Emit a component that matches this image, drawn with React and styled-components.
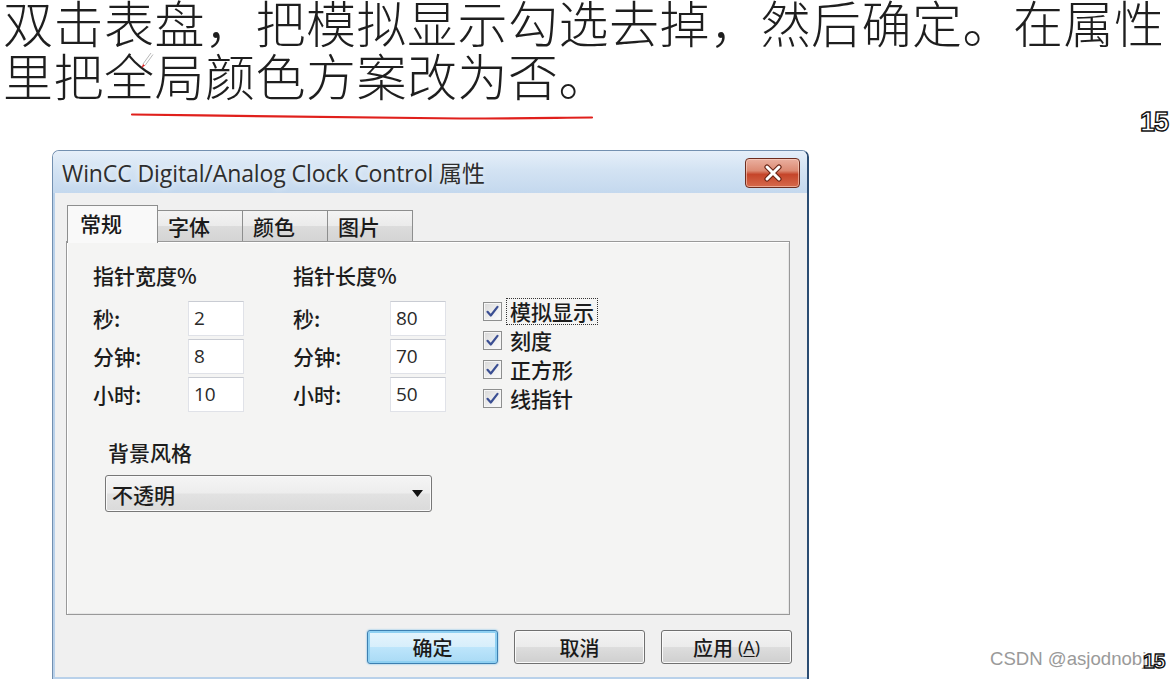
import React from 'react';
import styled, { createGlobalStyle } from 'styled-components';

const GlobalStyle = createGlobalStyle`
  html, body {
    margin: 0;
    padding: 0;
    background: #fff;
  }
  body {
    overflow: hidden;
  }
`;

const cjk = `"Noto Sans CJK SC", "Noto Sans", sans-serif`;
const ui = `"Open Sans", "Noto Sans CJK SC", sans-serif`;

const Page = styled.div`
  position: relative;
  width: 1172px;
  height: 679px;
  overflow: hidden;
  background: #fff;
`;

const Caption = styled.div`
  margin: -5px 0 0 3px;
  font-family: ${cjk};
  font-weight: 300;
  font-size: 50px;
  letter-spacing: 0.5px;
  color: #1e1e1e;
  white-space: nowrap;
`;

const CaptionLine = styled.div`
  height: 53px;
  line-height: 53px;
`;

const Underline = styled.svg`
  display: block;
  margin: 11px 0 0 130px;
  width: 465px;
  height: 10px;
`;

const Pen = styled.svg`
  position: absolute;
  left: 138px;
  top: 52px;
  width: 16px;
  height: 18px;
`;

const PageNo = styled.div`
  position: absolute;
  left: ${({ $x }) => $x}px;
  top: ${({ $y }) => $y}px;
  font-family: "Liberation Sans", Arial, sans-serif;
  font-weight: bold;
  font-size: ${({ $size }) => $size}px;
  line-height: 1;
  color: #fff;
  -webkit-text-stroke: 1.4px #111;
  letter-spacing: -1px;
`;

const Watermark = styled.div`
  position: absolute;
  left: 990px;
  top: 650px;
  font-family: "Liberation Sans", Arial, sans-serif;
  font-size: 18.6px;
  line-height: 1;
  color: #9a9a9a;
  white-space: nowrap;
`;

/* dialog window */

const Window = styled.div`
  width: 757px;
  height: 529px;
  box-sizing: border-box;
  margin: 28px 0 0 52px;
  border: 1px solid #7390b0;
  border-right: 2px solid #2c4d73;
  border-bottom: none;
  border-radius: 7px 7px 0 0;
  display: flex;
  flex-direction: column;
  overflow: hidden;
`;

const TitleBar = styled.div`
  height: 42px;
  flex: none;
  display: flex;
  align-items: center;
  justify-content: space-between;
  padding: 0 7px 0 9px;
  background: linear-gradient(180deg, #e6eff9 0%, #d3e3f3 45%, #c4d8ee 100%);
`;

const Title = styled.span`
  font-family: ${ui};
  font-size: 23px;
  color: #2e2e2e;
  letter-spacing: -0.1px;
  text-shadow: 0 0 6px rgba(255, 255, 255, 0.9);
`;

const CloseButton = styled.div`
  width: 55px;
  height: 30px;
  box-sizing: border-box;
  margin-top: 2px;
  border: 1px solid #6e2d1f;
  border-radius: 4px;
  display: flex;
  align-items: center;
  justify-content: center;
  background: linear-gradient(180deg, #eab0a0 0%, #dc8a73 42%, #c5452a 55%, #d66a4c 100%);
  box-shadow: inset 0 0 0 1px rgba(255, 220, 205, 0.55);
`;

const Body = styled.div`
  flex: 1;
  display: flex;
  flex-direction: column;
  background: #f0f0f0;
  border-left: 2px solid #b9d1ea;
  border-bottom: 2px solid #b9d1ea;
  padding: 12px 16px 0 11px;
`;

const Tabs = styled.div`
  display: flex;
  align-items: flex-end;
  padding-left: 1px;
  position: relative;
  z-index: 1;
  height: 36px;
`;

const Tab = styled.div`
  box-sizing: border-box;
  width: ${({ $w }) => $w}px;
  height: ${({ $active }) => ($active ? 38 : 31)}px;
  margin-bottom: ${({ $active }) => ($active ? -2 : 0)}px;
  padding-left: ${({ $active }) => ($active ? 12 : 10)}px;
  border: 1px solid #8d8e8e;
  border-bottom: none;
  ${({ $active, $first }) => (!$active && !$first ? 'border-left: none;' : '')}
  background: ${({ $active }) =>
    $active ? '#f9f9f9' : 'linear-gradient(180deg, #f3f3f3 0%, #ebebeb 50%, #dcdcdc 51%, #d4d4d4 100%)'};
  font-family: ${cjk};
  font-weight: 500;
  font-size: 21px;
  line-height: ${({ $active }) => ($active ? 34 : 31)}px;
  color: #1a1a1a;
`;

const Panel = styled.div`
  width: 724px;
  height: 374px;
  box-sizing: border-box;
  border: 1px solid #999;
  box-shadow: inset 1px 1px 0 #fff, inset -1px -1px 0 #e6e6e6;
  background: #f4f4f3;
  padding: 21px 0 0 26px;
  font-family: ${cjk};
  font-weight: 500;
  font-size: 21px;
  color: #1c1c1c;
`;

const TopRow = styled.div`
  display: flex;
  align-items: flex-start;
`;

const Group = styled.div`
  width: ${({ $w }) => $w}px;
`;

const GroupTitle = styled.div`
  height: 24px;
  line-height: 24px;
`;

const FieldGrid = styled.div`
  display: grid;
  grid-template-columns: ${({ $label }) => $label}px 56px;
  grid-auto-rows: 35px;
  row-gap: 3px;
  margin-top: 14px;
`;

const FieldLabel = styled.div`
  line-height: 35px;
`;

const NumberBox = styled.div`
  box-sizing: border-box;
  border: 1px solid #e0e2e8;
  border-top-color: #c9ccd3;
  background: #fff;
  padding-left: 5px;
  font-family: ${ui};
  font-weight: 400;
  font-size: 19px;
  line-height: 33px;
  color: #2a2a2a;
`;

const CheckList = styled.div`
  margin: 34px 0 0 37px;
  display: flex;
  flex-direction: column;
`;

const CheckRow = styled.div`
  height: 29px;
  display: flex;
  align-items: center;
  gap: 4px;
`;

const Box = styled.div`
  width: 19px;
  height: 19px;
  box-sizing: border-box;
  border: 1px solid #8e8f8f;
  background: linear-gradient(135deg, #d8d8d8 0%, #f0f0f0 60%, #fcfcfc 100%);
  box-shadow: inset 0 0 0 1px #f6f6f6;
  display: flex;
  align-items: center;
  justify-content: center;
`;

const CheckText = styled.span`
  padding: 0 3px;
  line-height: 25px;
  border: 1px ${({ $focus }) => ($focus ? 'dotted #333' : 'solid transparent')};
`;

const StyleSection = styled.div`
  margin: 27px 0 0 12px;
`;

const SectionTitle = styled.div`
  margin-left: 3px;
  height: 24px;
  line-height: 24px;
`;

const Select = styled.div`
  margin-top: 11px;
  width: 327px;
  height: 37px;
  box-sizing: border-box;
  border: 1px solid #777;
  border-radius: 3px;
  padding: 0 8px 0 6px;
  display: flex;
  align-items: center;
  justify-content: space-between;
  background: linear-gradient(180deg, #f5f5f5 0%, #ededed 48%, #e2e2e2 52%, #dadada 100%);
  box-shadow: inset 0 0 0 1px #fafafa;
`;

const Footer = styled.div`
  display: flex;
  justify-content: flex-end;
  gap: 16px;
  padding-top: 15px;
  margin-right: -1px;
`;

const Button = styled.div`
  width: 131px;
  height: 34px;
  box-sizing: border-box;
  border: 1px solid ${({ $primary }) => ($primary ? '#3c7fb1' : '#707070')};
  border-radius: 3px;
  background: ${({ $primary }) =>
    $primary
      ? 'linear-gradient(180deg, #e6f5fd 0%, #d7eefb 50%, #bde5fb 51%, #a9daf5 100%)'
      : 'linear-gradient(180deg, #f3f3f3 0%, #ebebeb 50%, #dddddd 51%, #cfcfcf 100%)'};
  box-shadow: ${({ $primary }) =>
    $primary ? 'inset 0 0 0 2px #8fd0f2, 0 0 2px #5bb3e6' : 'inset 0 0 0 1px #fafafa'};
  display: flex;
  align-items: center;
  justify-content: center;
  font-family: ${cjk};
  font-weight: 500;
  font-size: 20px;
  color: #1a1a1a;
`;

const Mnemonic = styled.span`
  font-family: ${ui};
  font-size: 18px;
  margin-left: 5px;
  u {
    text-decoration-thickness: 1px;
    text-underline-offset: 2px;
  }
`;

const widths = [
  ['秒:', '2', '80'],
  ['分钟:', '8', '70'],
  ['小时:', '10', '50'],
];

const checks = ['模拟显示', '刻度', '正方形', '线指针'];

const tabs = [
  { label: '常规', w: 91 },
  { label: '字体', w: 85 },
  { label: '颜色', w: 85 },
  { label: '图片', w: 85 },
];

const Tick = () => (
  <svg width="15" height="15" viewBox="0 0 15 15">
    <path d="M2.5 7.8 L5.8 11.5 L12.5 2.8" fill="none" stroke="#3b4f93" strokeWidth="2.2" strokeLinecap="round" strokeLinejoin="round" />
  </svg>
);

const App = () => {
  return (
    <Page>
      <GlobalStyle />
      <Caption>
        <CaptionLine>双击表盘，把模拟显示勾选去掉，然后确定。在属性</CaptionLine>
        <CaptionLine>里把全局颜色方案改为否。</CaptionLine>
      </Caption>
      <Underline viewBox="0 0 465 10">
        <path d="M2 2.5 C 120 4, 250 6.5, 330 6.5 S 430 5.5, 462 5.5" fill="none" stroke="#e0201c" strokeWidth="2.2" strokeLinecap="round" />
      </Underline>
      <Pen viewBox="0 0 16 18">
        <path d="M13 1 L5 12 M15 2.5 L7 13.5" stroke="#b8b8b8" strokeWidth="1" fill="none" />
        <path d="M5 12 L7 13.5 L3.5 16 Z" fill="#e02020" />
      </Pen>

      <Window>
        <TitleBar>
          <Title>WinCC Digital/Analog Clock Control 属性</Title>
          <CloseButton>
            <svg width="22" height="18" viewBox="0 0 22 18">
              <path d="M5 3 L17 15 M17 3 L5 15" stroke="#6a2414" strokeWidth="5.2" strokeLinecap="round" />
              <path d="M5 3 L17 15 M17 3 L5 15" stroke="#fff" strokeWidth="3" strokeLinecap="round" />
            </svg>
          </CloseButton>
        </TitleBar>
        <Body>
          <Tabs>
            {tabs.map((t, i) => (
              <Tab key={t.label} $w={t.w} $active={i === 0} $first={i === 0}>
                {t.label}
              </Tab>
            ))}
          </Tabs>
          <Panel>
            <TopRow>
              <Group $w={200}>
                <GroupTitle>指针宽度%</GroupTitle>
                <FieldGrid $label={95}>
                  {widths.map(([label, value]) => (
                    <React.Fragment key={label}>
                      <FieldLabel>{label}</FieldLabel>
                      <NumberBox>{value}</NumberBox>
                    </React.Fragment>
                  ))}
                </FieldGrid>
              </Group>
              <Group $w={153}>
                <GroupTitle>指针长度%</GroupTitle>
                <FieldGrid $label={97}>
                  {widths.map(([label, , value]) => (
                    <React.Fragment key={label}>
                      <FieldLabel>{label}</FieldLabel>
                      <NumberBox>{value}</NumberBox>
                    </React.Fragment>
                  ))}
                </FieldGrid>
              </Group>
              <CheckList>
                {checks.map((c, i) => (
                  <CheckRow key={c}>
                    <Box>
                      <Tick />
                    </Box>
                    <CheckText $focus={i === 0}>{c}</CheckText>
                  </CheckRow>
                ))}
              </CheckList>
            </TopRow>
            <StyleSection>
              <SectionTitle>背景风格</SectionTitle>
              <Select>
                <span>不透明</span>
                <svg width="11" height="7" viewBox="0 0 11 7">
                  <path d="M0 0 H11 L5.5 7 Z" fill="#111" />
                </svg>
              </Select>
            </StyleSection>
          </Panel>
          <Footer>
            <Button $primary>确定</Button>
            <Button>取消</Button>
            <Button>
              应用
              <Mnemonic>
                (<u>A</u>)
              </Mnemonic>
            </Button>
          </Footer>
        </Body>
      </Window>

      <PageNo $x={1140} $y={109} $size={27}>
        15
      </PageNo>
      <Watermark>CSDN @asjodnobj</Watermark>
      <PageNo $x={1143} $y={650} $size={21}>
        15
      </PageNo>
    </Page>
  );
};

export default App;
